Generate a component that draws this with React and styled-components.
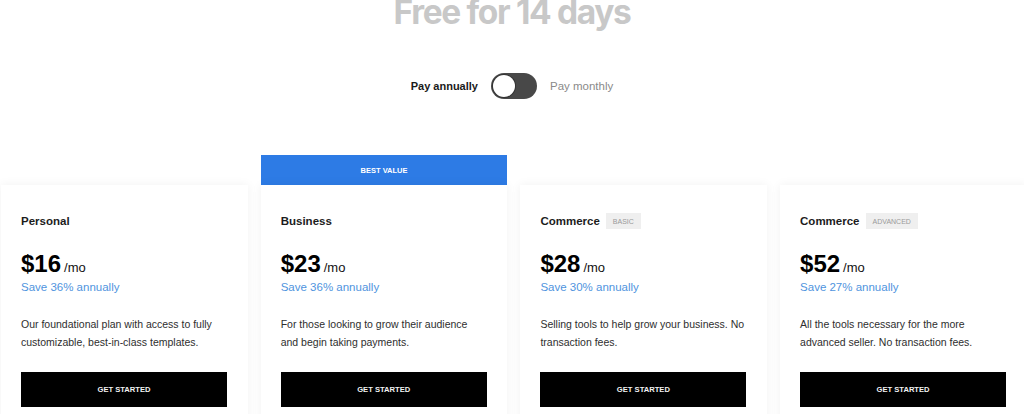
import React from "react";
import styled, { createGlobalStyle } from "styled-components";

const Global = createGlobalStyle`
  html, body { margin: 0; padding: 0; background: #ffffff; }
  body { font-family: "Liberation Sans", Arial, sans-serif; overflow: hidden; }
  * { box-sizing: border-box; }
`;

const Page = styled.div`
  width: 1024px;
  height: 414px;
  overflow: hidden;
  display: flex;
  flex-direction: column;
  align-items: center;
`;

const Hero = styled.h1`
  margin: -8px 0 0;
  font-family: Inter, "Liberation Sans", sans-serif;
  font-weight: 700;
  font-size: 33.5px;
  line-height: 40px;
  letter-spacing: -0.04em;
  color: #c8c8c8;
`;

const ToggleRow = styled.div`
  margin-top: 41px;
  display: flex;
  align-items: center;
  gap: 13px;
`;

const ToggleLabel = styled.span`
  font-size: ${(p) => (p.$active ? "11px" : "11.5px")};
  font-weight: ${(p) => (p.$active ? 700 : 400)};
  color: ${(p) => (p.$active ? "#1a1a1a" : "#8a8a8a")};
`;

const Track = styled.div`
  width: 46px;
  height: 26px;
  border-radius: 13px;
  background: #484848;
  padding: 2px;
  display: flex;
  align-items: center;
`;

const Knob = styled.div`
  width: 22px;
  height: 22px;
  border-radius: 50%;
  background: #ffffff;
  box-shadow: 0 0 0 1px #333;
`;

const Plans = styled.div`
  align-self: stretch;
  margin-top: 56px;
  padding-left: 1px;
  display: flex;
  align-items: flex-end;
  gap: 13px;
`;

const Column = styled.div`
  width: 246.7px;
  flex: none;
  display: flex;
  flex-direction: column;
`;

const Banner = styled.div`
  height: 30px;
  background: #2d7be5;
  color: #ffffff;
  font-size: 7.5px;
  font-weight: 700;
  display: flex;
  align-items: center;
  justify-content: center;
`;

const Card = styled.div`
  background: #ffffff;
  box-shadow: 0 0 10px rgba(0, 0, 0, 0.06);
  padding: 28px 20px 24px;
  display: flex;
  flex-direction: column;
`;

const TitleRow = styled.div`
  display: flex;
  align-items: center;
  gap: 6px;
  height: 16px;
`;

const PlanName = styled.span`
  font-size: 11.5px;
  font-weight: 700;
  color: #1c1c1c;
`;

const Tag = styled.span`
  background: #efefef;
  color: #9a9a9a;
  font-size: 7px;
  padding: 0 7px;
  height: 16px;
  display: inline-flex;
  align-items: center;
`;

const PriceRow = styled.div`
  margin-top: 23px;
  display: flex;
  align-items: baseline;
  gap: 3px;
  line-height: 24px;
`;

const Amount = styled.span`
  font-size: 24px;
  font-weight: 700;
  color: #000;
`;

const Per = styled.span`
  font-size: 13px;
  color: #111;
`;

const Save = styled.div`
  margin-top: -1px;
  font-size: 11.5px;
  line-height: 16px;
  color: #5094de;
`;

const Desc = styled.p`
  margin: 20px 0 0;
  font-size: 10.5px;
  line-height: 18px;
  color: #2e2e2e;
  height: 36px;
`;

const Button = styled.button`
  margin-top: 21px;
  height: 35px;
  width: 206px;
  border: none;
  background: #000;
  color: #f2f2f2;
  font-family: "Liberation Sans", Arial, sans-serif;
  font-size: 7.6px;
  font-weight: 700;
  cursor: pointer;
`;

const plans = [
  { name: "Personal", price: "$16", save: "Save 36% annually", desc: "Our foundational plan with access to fully customizable, best-in-class templates." },
  { name: "Business", price: "$23", save: "Save 36% annually", desc: "For those looking to grow their audience and begin taking payments.", featured: true },
  { name: "Commerce", tag: "BASIC", price: "$28", save: "Save 30% annually", desc: "Selling tools to help grow your business. No transaction fees." },
  { name: "Commerce", tag: "ADVANCED", price: "$52", save: "Save 27% annually", desc: "All the tools necessary for the more advanced seller. No transaction fees." },
];

export default function App() {
  return (
    <Page>
      <Global />
      <Hero>Free for 14 days</Hero>
      <ToggleRow>
        <ToggleLabel $active>Pay annually</ToggleLabel>
        <Track>
          <Knob />
        </Track>
        <ToggleLabel>Pay monthly</ToggleLabel>
      </ToggleRow>
      <Plans>
        {plans.map((p, i) => (
          <Column key={i}>
            {p.featured && <Banner>BEST VALUE</Banner>}
            <Card>
              <TitleRow>
                <PlanName>{p.name}</PlanName>
                {p.tag && <Tag>{p.tag}</Tag>}
              </TitleRow>
              <PriceRow>
                <Amount>{p.price}</Amount>
                <Per>/mo</Per>
              </PriceRow>
              <Save>{p.save}</Save>
              <Desc>{p.desc}</Desc>
              <Button>GET STARTED</Button>
            </Card>
          </Column>
        ))}
      </Plans>
    </Page>
  );
}
